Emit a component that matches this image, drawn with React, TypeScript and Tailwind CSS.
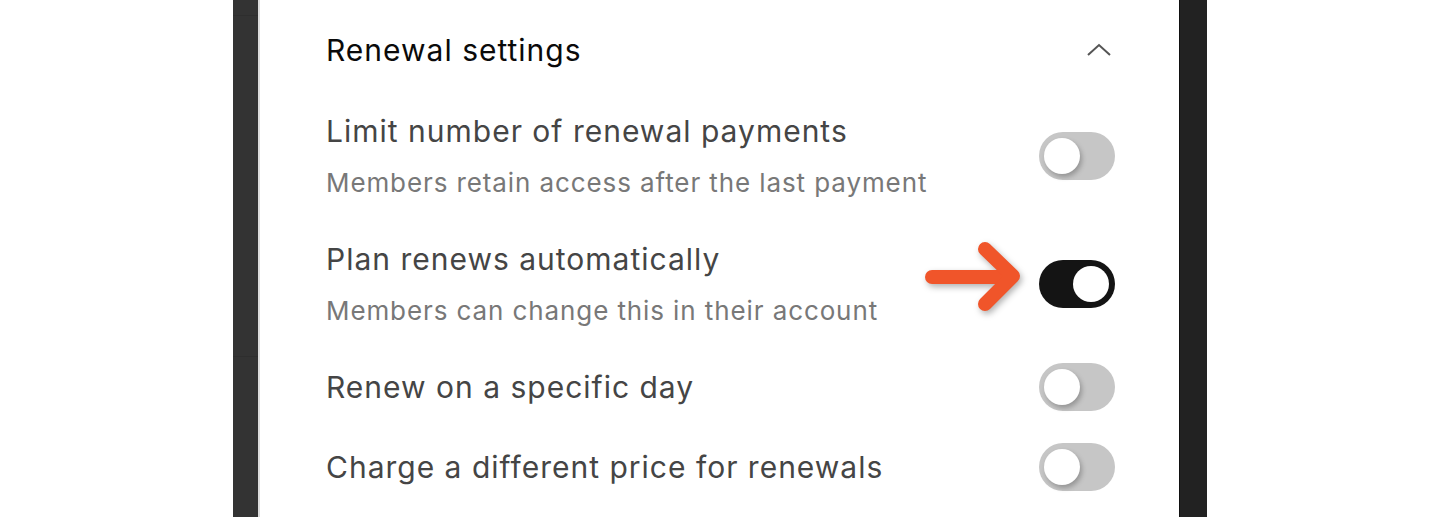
import React from 'react';

type RowProps = {
  label: string;
  hint?: string;
  on?: boolean;
  className?: string;
};

function Toggle({ on }: { on?: boolean }) {
  return (
    <div
      className={`relative h-[48px] w-[76px] shrink-0 rounded-full ${on ? 'bg-[#141414]' : 'bg-[#c6c6c6]'}`}
    >
      <div
        className={`absolute top-[6px] h-[36px] w-[36px] rounded-full bg-white ${
          on ? 'left-[34px]' : 'left-[5px] shadow-[2px_3px_5px_rgba(0,0,0,0.25)]'
        }`}
      />
    </div>
  );
}

function Row({ label, hint, on, className }: RowProps) {
  return (
    <div className={`flex items-center justify-between ${className ?? ''}`}>
      <div className="flex flex-col">
        <div className="text-[30px] leading-[36px] tracking-[1px] text-[#454545]">{label}</div>
        {hint && (
          <div className="mt-[18px] text-[26px] leading-[32px] tracking-[0.9px] text-[#787878]">{hint}</div>
        )}
      </div>
      <Toggle on={on} />
    </div>
  );
}

export default function App() {
  return (
    <div
      className="flex h-[517px] w-[1440px] overflow-hidden bg-white"
      style={{ fontFamily: 'Inter, "Noto Sans", sans-serif' }}
    >
      <div className="w-[233px] shrink-0 bg-white" />
      {/* left backdrop strip */}
      <div className="flex w-[25px] shrink-0 flex-col bg-[#333333]">
        <div className="h-[16px] border-b border-[#2e2e2e]" />
        <div className="h-[341px] border-b border-[#2e2e2e]" />
      </div>
      <div className="w-[2px] shrink-0 bg-[#dcdcdc]" />

      {/* settings panel */}
      <div className="relative w-[919px] shrink-0 bg-white pl-[66px] pr-[64px] pt-[32px]">
        <div className="flex items-center justify-between">
          <div className="text-[30px] leading-[36px] tracking-[1px] text-[#0a0a0a]">Renewal settings</div>
          <svg width="26" height="16" viewBox="0 0 26 16" className="mr-[3px]">
            <polyline points="2,13 13,3 24,13" fill="none" stroke="#555" strokeWidth="2" />
          </svg>
        </div>

        <Row
          className="mt-[45px]"
          label="Limit number of renewal payments"
          hint="Members retain access after the last payment"
        />
        <Row
          className="mt-[42px]"
          label="Plan renews automatically"
          hint="Members can change this in their account"
          on
        />
        <Row className="mt-[36px]" label="Renew on a specific day" />
        <Row className="mt-[32px]" label="Charge a different price for renewals" />

        {/* pointer arrow */}
        <svg
          width="110"
          height="84"
          viewBox="0 0 110 84"
          className="absolute left-[656px] top-[234px] drop-shadow-[2px_3px_3px_rgba(0,0,0,0.3)]"
        >
          <g fill="none" stroke="#f0552a" strokeWidth="14" strokeLinecap="round" strokeLinejoin="round">
            <line x1="16" y1="43" x2="94" y2="43" />
            <polyline points="69,15 97,42 69,70" />
          </g>
        </svg>
      </div>

      {/* right backdrop strip */}
      <div className="w-[1px] shrink-0 bg-[#111111]" />
      <div className="w-[27px] shrink-0 bg-[#222222]" />
      <div className="flex-1 bg-white" />
    </div>
  );
}
